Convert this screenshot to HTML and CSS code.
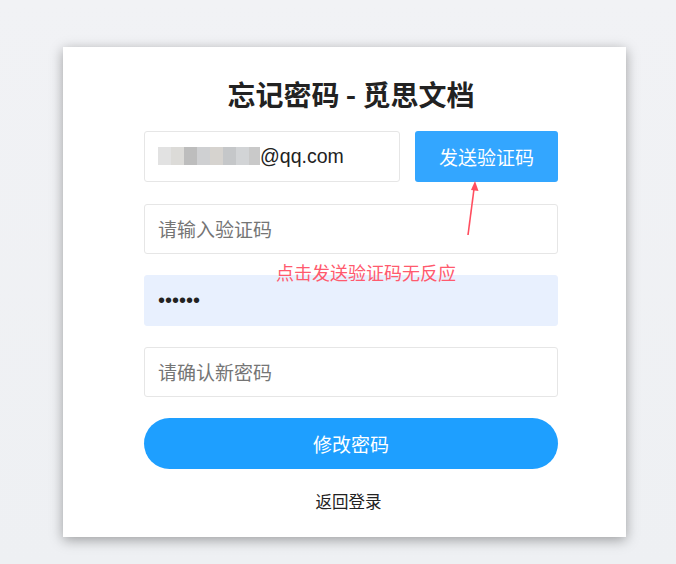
FILE: index.html
```html
<!DOCTYPE html>
<html lang="zh">
<head>
<meta charset="utf-8">
<title>忘记密码 - 觅思文档</title>
<link rel="stylesheet" href="styles.css">
</head>
<body>
<div class="card">
  <h1 class="title">忘记密码 - 觅思文档</h1>
  <div class="row">
    <div class="input email"><span class="blur"><i></i><i></i><i></i><i></i><i></i><i></i><i></i><i></i></span>@qq.com</div>
    <button class="send">发送验证码</button>
  </div>
  <div class="input placeholder">请输入验证码</div>
  <div class="input filled">••••••</div>
  <div class="input placeholder">请确认新密码</div>
  <button class="submit">修改密码</button>
  <a class="back">返回登录</a>
  <div class="note">点击发送验证码无反应</div>
  <svg class="arrow" width="20" height="60" viewBox="0 0 20 60">
    <path d="M5 56 L11 10" stroke="#ff4d5f" stroke-width="1.6" fill="none"/>
    <path d="M12 2 L15.5 12 L8 11 Z" fill="#ff4d5f"/>
  </svg>
</div>
</body>
</html>
```
FILE: styles.css
```css
html, body { margin: 0; padding: 0; }
body {
  background: linear-gradient(180deg, #f1f2f5 0%, #eef0f3 100%);
  height: 564px;
  font-family: "Liberation Sans", "Noto Sans CJK SC", sans-serif;
  overflow: hidden;
}
.card {
  position: relative;
  box-sizing: border-box;
  width: 563px;
  height: 490px;
  margin: 47px 0 0 63px;
  padding: 29px 68px 0 81px;
  background: #fff;
  box-shadow: 0 3px 12px rgba(0,0,0,0.35);
  display: flex;
  flex-direction: column;
}
.title {
  margin: 0 0 19px 0;
  font-family: "Noto Sans CJK SC", sans-serif;
  font-size: 28px;
  font-weight: 700;
  line-height: 36px;
  color: #222;
  text-align: center;
}
.row {
  display: flex;
  gap: 15px;
  margin-bottom: 22px;
}
.input {
  box-sizing: border-box;
  height: 50.5px;
  border: 1px solid #e6e6e6;
  border-radius: 3px;
  padding: 0 13px;
  display: flex;
  align-items: center;
  font-size: 18px;
  margin-bottom: 21px;
  color: #333;
}
.row .input { margin-bottom: 0; flex: 0 0 256px; }
.email { font-family: "Liberation Sans", sans-serif; color: #222; font-size: 19.5px; }
.blur { display: inline-flex; height: 18px; }
.blur i { display: block; width: 13px; height: 18px; }
.blur i:nth-child(1) { background: #e2e2e2; }
.blur i:nth-child(2) { background: #dcdbd8; }
.blur i:nth-child(3) { background: #bdbdbd; }
.blur i:nth-child(4) { background: #cfd0d2; }
.blur i:nth-child(5) { background: #d6d3cf; }
.blur i:nth-child(6) { background: #c5c7c9; }
.blur i:nth-child(7) { background: #d2d4d6; }
.blur i:nth-child(8) { background: #c9c9c9; width: 11px; }
.placeholder {
  font-family: "Noto Sans CJK SC", sans-serif;
  color: #757575;
  font-size: 19px;
}
.filled {
  background: #e8f0fe;
  border-color: #e8f0fe;
  color: #222;
  font-size: 20px;
}
.send {
  flex: 1;
  height: 50.5px;
  border: none;
  border-radius: 3px;
  background: #33a6ff;
  color: #fff;
  font-family: "Noto Sans CJK SC", sans-serif;
  font-size: 19px;
  padding: 0;
}
.submit {
  height: 51px;
  border: none;
  border-radius: 26px;
  background: #1e9fff;
  color: #fff;
  font-family: "Noto Sans CJK SC", sans-serif;
  font-size: 19px;
  margin: 0;
  padding: 0;
}
.back {
  margin-top: 20px;
  padding-right: 5px;
  text-align: center;
  font-family: "Noto Sans CJK SC", sans-serif;
  font-size: 16.5px;
  line-height: 24px;
  color: #222;
}
.note {
  position: absolute;
  left: 213px;
  top: 213px;
  font-family: "Noto Sans CJK SC", sans-serif;
  font-size: 18px;
  line-height: 24px;
  color: #ff5a6e;
}
.arrow {
  position: absolute;
  left: 400px;
  top: 132px;
}
```
